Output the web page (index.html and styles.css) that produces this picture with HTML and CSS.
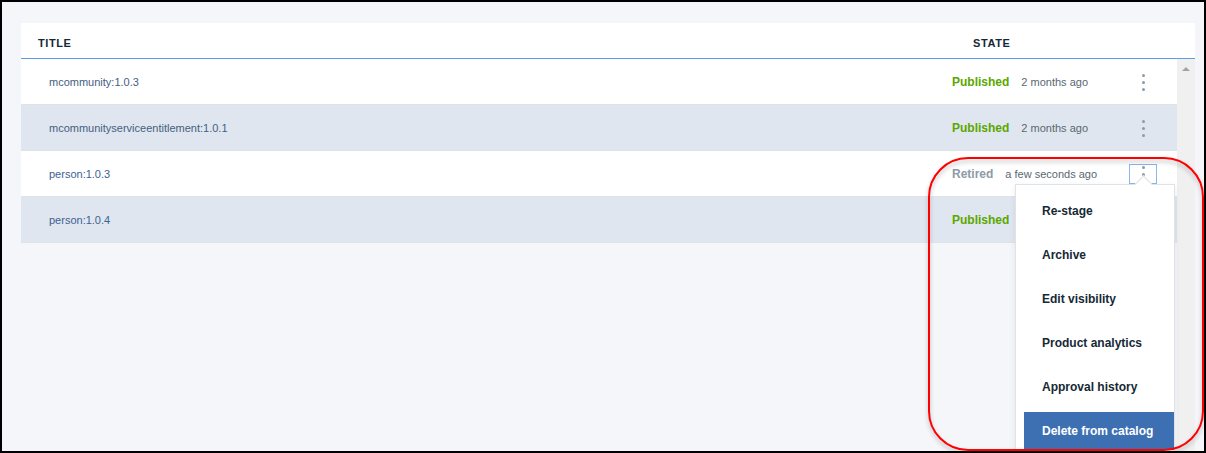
FILE: index.html
```html
<!DOCTYPE html>
<html lang="en">
<head>
<meta charset="utf-8">
<title>Products</title>
<link rel="stylesheet" href="styles.css">
</head>
<body>
<div class="frame">
  <div class="table-head">
    <div class="th th-title">Title</div>
    <div class="th th-state">State</div>
  </div>
  <div class="table-body">
    <div class="rows">
      <div class="row">
        <div class="cell-title">mcommunity:1.0.3</div>
        <div class="cell-state"><span class="status published">Published</span><span class="time">2 months ago</span></div>
        <div class="cell-actions"><button class="kebab"><i></i><i></i><i></i></button></div>
      </div>
      <div class="row alt">
        <div class="cell-title">mcommunityserviceentitlement:1.0.1</div>
        <div class="cell-state"><span class="status published">Published</span><span class="time">2 months ago</span></div>
        <div class="cell-actions"><button class="kebab"><i></i><i></i><i></i></button></div>
      </div>
      <div class="row">
        <div class="cell-title link">person:1.0.3</div>
        <div class="cell-state"><span class="status retired">Retired</span><span class="time">a few seconds ago</span></div>
        <div class="cell-actions">
          <button class="kebab open"><i></i><i></i><i></i></button>
          <div class="menu">
            <span class="caret"></span>
            <ul class="menu-list">
              <li class="menu-item">Re-stage</li>
              <li class="menu-item">Archive</li>
              <li class="menu-item">Edit visibility</li>
              <li class="menu-item">Product analytics</li>
              <li class="menu-item">Approval history</li>
              <li class="menu-item danger">Delete from catalog</li>
            </ul>
          </div>
        </div>
      </div>
      <div class="row alt">
        <div class="cell-title link">person:1.0.4</div>
        <div class="cell-state"><span class="status published">Published</span><span class="time">2 months ago</span></div>
        <div class="cell-actions"><button class="kebab"><i></i><i></i><i></i></button></div>
      </div>
    </div>
    <div class="scrollbar"><span class="arrow-up"></span></div>
  </div>
  <div class="annotation"></div>
</div>
</body>
</html>
```

FILE: styles.css
```css
html, body {
  margin: 0;
  padding: 0;
}

body {
  font-family: "Liberation Sans", Arial, sans-serif;
  background: #000;
}

.frame {
  position: relative;
  width: 1206px;
  height: 453px;
  box-sizing: border-box;
  border: 2px solid #000;
  background: #f4f6f9;
  padding: 21px 9px 0 19px;
  display: flex;
  flex-direction: column;
  overflow: hidden;
}

.table-head {
  height: 36px;
  box-sizing: border-box;
  background: #fff;
  border-bottom: 1px solid #5f9de3;
  display: flex;
  align-items: center;
  padding-top: 5px;
  padding-left: 17px;
  flex-shrink: 0;
}

.th {
  font-size: 11px;
  font-weight: bold;
  letter-spacing: 0.6px;
  text-transform: uppercase;
  color: #152935;
}

.th-title {
  flex: 1;
}

.th-state {
  width: 222px;
}

.table-body {
  flex: 1;
  display: flex;
}

.rows {
  flex: 1;
}

.row {
  height: 46px;
  box-sizing: border-box;
  background: #fff;
  border-bottom: 1px solid #dfe3e6;
  display: flex;
  align-items: center;
}

.row.alt {
  background: #e0e6ef;
}

.cell-title {
  flex: 1;
  padding-left: 28px;
  font-size: 11px;
  color: #44607f;
}

.cell-title.link {
  color: #3b6294;
}

.cell-state {
  width: 177px;
  display: flex;
  align-items: baseline;
}

.status {
  font-size: 12px;
  font-weight: bold;
}

.status.published {
  color: #5aa700;
}

.status.retired {
  color: #8c9ba5;
}

.time {
  margin-left: 12px;
  font-size: 11px;
  color: #5a6872;
}

.cell-actions {
  position: relative;
  width: 28px;
  margin-right: 20px;
}

.kebab {
  width: 28px;
  height: 20px;
  box-sizing: border-box;
  border: 1px solid transparent;
  background: transparent;
  padding: 0;
  display: flex;
  flex-direction: column;
  align-items: center;
  justify-content: center;
  gap: 4px;
  margin-top: 1px;
}

.kebab i {
  display: block;
  width: 3px;
  height: 3px;
  border-radius: 50%;
  background: #8c9ba5;
}

.kebab.open {
  border-color: #8cb6ee;
}

.menu {
  position: absolute;
  top: 100%;
  right: -18px;
  width: 160px;
  height: 290px;
  box-sizing: border-box;
  background: #fff;
  border: 1px solid #dfe3e6;
  box-shadow: 0 2px 6px rgba(0, 0, 0, 0.08);
  z-index: 2;
}

.caret {
  position: absolute;
  left: 121px;
  top: -7px;
  width: 12px;
  height: 12px;
  background: #fff;
  border-top: 1px solid #dfe3e6;
  border-left: 1px solid #dfe3e6;
  transform: rotate(45deg);
}

.menu-list {
  list-style: none;
  margin: 0;
  padding: 7px 0 0 0;
  position: relative;
}

.menu-item {
  height: 38px;
  line-height: 38px;
  margin: 0 0 6px 8px;
  padding-left: 18px;
  font-size: 12px;
  font-weight: bold;
  color: #152935;
}

.menu-item.danger {
  background: #3d70b2;
  color: #fff;
}

.scrollbar {
  width: 18px;
  background: #f0f0f0;
  display: flex;
  justify-content: center;
}

.arrow-up {
  margin-top: 8px;
  width: 0;
  height: 0;
  border-left: 4px solid transparent;
  border-right: 4px solid transparent;
  border-bottom: 4px solid #a3a3a3;
}

.annotation {
  position: absolute;
  left: 926px;
  top: 155px;
  width: 276px;
  height: 294px;
  box-sizing: border-box;
  border: 2px solid #ff0000;
  border-radius: 40px;
  filter: drop-shadow(0 3px 2px rgba(0, 0, 0, 0.25));
  z-index: 5;
  pointer-events: none;
}
```
